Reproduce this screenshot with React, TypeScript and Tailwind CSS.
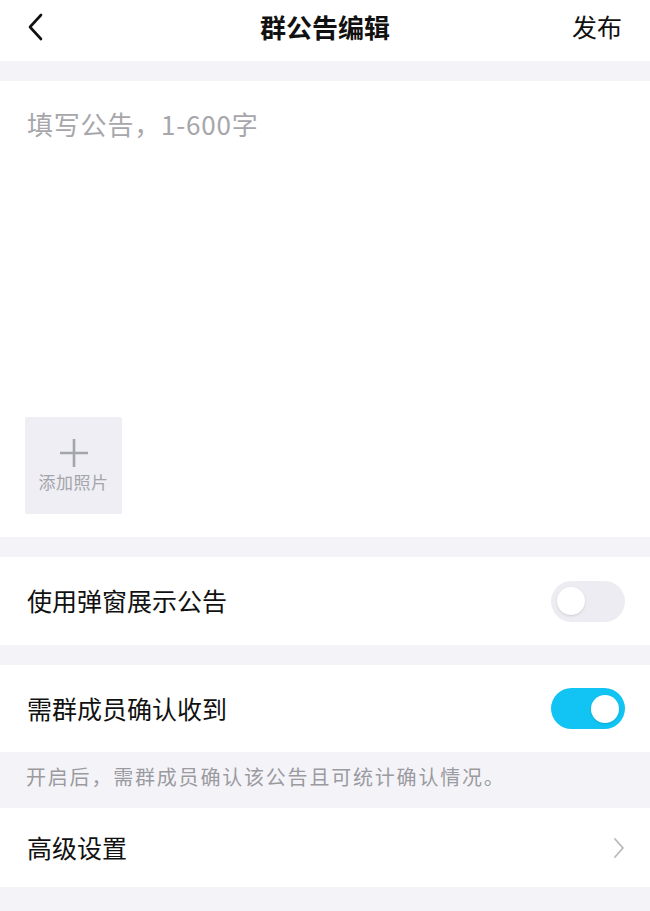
const font = { fontFamily: '"Noto Sans CJK SC", "Noto Sans", sans-serif' };

function Toggle({ on }: { on: boolean }) {
  return (
    <div
      className={`w-[74px] h-[41px] rounded-full flex items-center px-[6px] ${
        on ? "bg-[#12c4f3] justify-end" : "bg-[#ececf2] justify-start"
      }`}
    >
      <div className="w-[28px] h-[28px] rounded-full bg-white shadow-sm" />
    </div>
  );
}

export default function App() {
  return (
    <div className="w-[650px] h-[911px] bg-[#f4f4f8] flex flex-col text-[#111]" style={font}>
      {/* Header */}
      <div className="h-[61px] bg-white grid grid-cols-[1fr_auto_1fr] items-center px-[24px] pb-[8px]">
        <svg width="20" height="28" viewBox="0 0 20 28" className="ml-[2px]">
          <path d="M15 2 L4 14 L15 26" fill="none" stroke="#111" strokeWidth="2.6" strokeLinecap="round" strokeLinejoin="round" />
        </svg>
        <h1 className="text-[26px] font-bold">群公告编辑</h1>
        <span className="text-[25px] mr-[4px] justify-self-end">发布</span>
      </div>

      {/* Editor */}
      <div className="mt-[20px] h-[456px] bg-white flex flex-col justify-between px-[25px] pt-[23px] pb-[23px]">
        <p className="text-[26px] text-[#a6a6ab] pl-[2px] tracking-[0.8px]">填写公告，1-600字</p>
        <div className="w-[97px] h-[97px] bg-[#eeeef4] rounded-[2px] flex flex-col items-center pt-[20px]">
          <svg width="32" height="32" viewBox="0 0 32 32">
            <path d="M16 2 V30 M2 16 H30" stroke="#a4a4ab" strokeWidth="2.6" />
          </svg>
          <span className="text-[17px] tracking-[0.5px] text-[#a4a4ab]">添加照片</span>
        </div>
      </div>

      {/* Popup toggle */}
      <div className="mt-[20px] h-[88px] bg-white flex items-center justify-between pl-[27px] pr-[25px]">
        <span className="text-[25px]">使用弹窗展示公告</span>
        <Toggle on={false} />
      </div>

      {/* Confirm toggle */}
      <div className="mt-[20px] h-[87px] bg-white flex items-center justify-between pl-[27px] pr-[25px]">
        <span className="text-[25px]">需群成员确认收到</span>
        <Toggle on={true} />
      </div>
      <div className="h-[56px] flex items-center pl-[26px] pb-[7px]">
        <span className="text-[20px] tracking-[1.8px] text-[#9a9aa0]">开启后，需群成员确认该公告且可统计确认情况。</span>
      </div>

      {/* Advanced */}
      <div className="h-[79px] bg-white flex items-center justify-between pl-[27px] pr-[25px]">
        <span className="text-[25px]">高级设置</span>
        <svg width="12" height="22" viewBox="0 0 12 22">
          <path d="M2 2 L10 11 L2 20" fill="none" stroke="#b8b8bd" strokeWidth="1.8" strokeLinecap="round" strokeLinejoin="round" />
        </svg>
      </div>
    </div>
  );
}
